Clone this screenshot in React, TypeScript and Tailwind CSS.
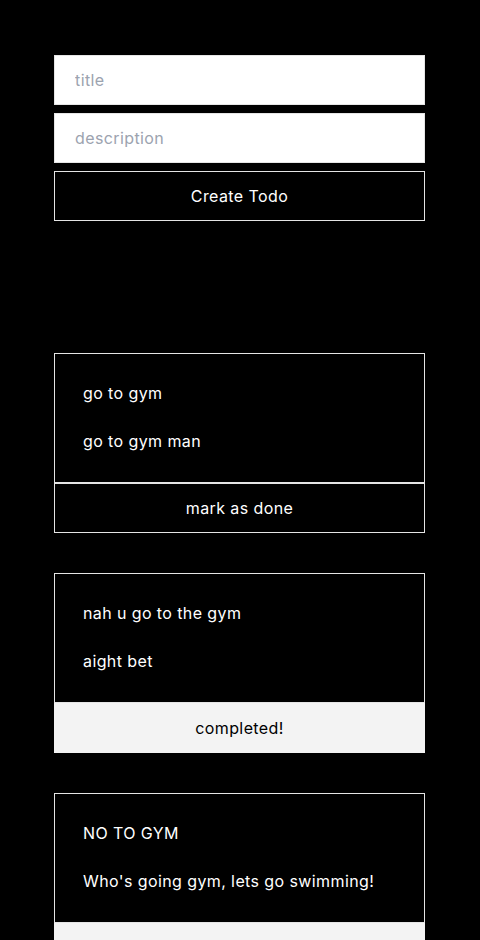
import { useState } from "react";

type Todo = {
  title: string;
  description: string;
  completed: boolean;
};

const TODOS: Todo[] = [
  { title: "go to gym", description: "go to gym man", completed: false },
  { title: "nah u go to the gym", description: "aight bet", completed: true },
  {
    title: "NO TO GYM",
    description: "Who's going gym, lets go swimming!",
    completed: true,
  },
];

function TodoCard({ todo }: { todo: Todo }) {
  return (
    <div>
      <div className="flex flex-col gap-6 border border-[#e5e5e5] px-7 pt-[27px] pb-[29px] text-white">
        <p className="leading-6">{todo.title}</p>
        <p className="leading-6">{todo.description}</p>
      </div>
      {todo.completed ? (
        <button
          type="button"
          className="h-[50px] w-full border border-[#f3f3f3] bg-[#f3f3f3] tracking-[0.4px] text-black"
        >
          completed!
        </button>
      ) : (
        <button
          type="button"
          className="h-[50px] w-full border border-[#e5e5e5] bg-black tracking-[0.4px] text-white"
        >
          mark as done
        </button>
      )}
    </div>
  );
}

export default function App() {
  const [title, setTitle] = useState("");
  const [description, setDescription] = useState("");

  return (
    <div
      className="min-h-screen bg-black px-[54px] pt-[55px] text-base tracking-[0.4px]"
      style={{ fontFamily: "Inter, 'Open Sans', sans-serif" }}
    >
      <div className="flex w-[371px] flex-col">
        <div className="flex flex-col gap-[8px]">
          <input
            value={title}
            onChange={(e) => setTitle(e.target.value)}
            placeholder="title"
            className="h-[50px] border border-[#e5e5e5] bg-white px-5 tracking-[0.4px] text-black outline-none placeholder:text-[#9ca3af]"
          />
          <input
            value={description}
            onChange={(e) => setDescription(e.target.value)}
            placeholder="description"
            className="h-[50px] border border-[#e5e5e5] bg-white px-5 tracking-[0.4px] text-black outline-none placeholder:text-[#9ca3af]"
          />
          <button
            type="button"
            className="h-[50px] border border-[#e5e5e5] bg-black tracking-[0.4px] text-white"
          >
            Create Todo
          </button>
        </div>

        <div className="mt-[132px] flex flex-col gap-10">
          {TODOS.map((t) => (
            <TodoCard key={t.title} todo={t} />
          ))}
        </div>
      </div>
    </div>
  );
}
